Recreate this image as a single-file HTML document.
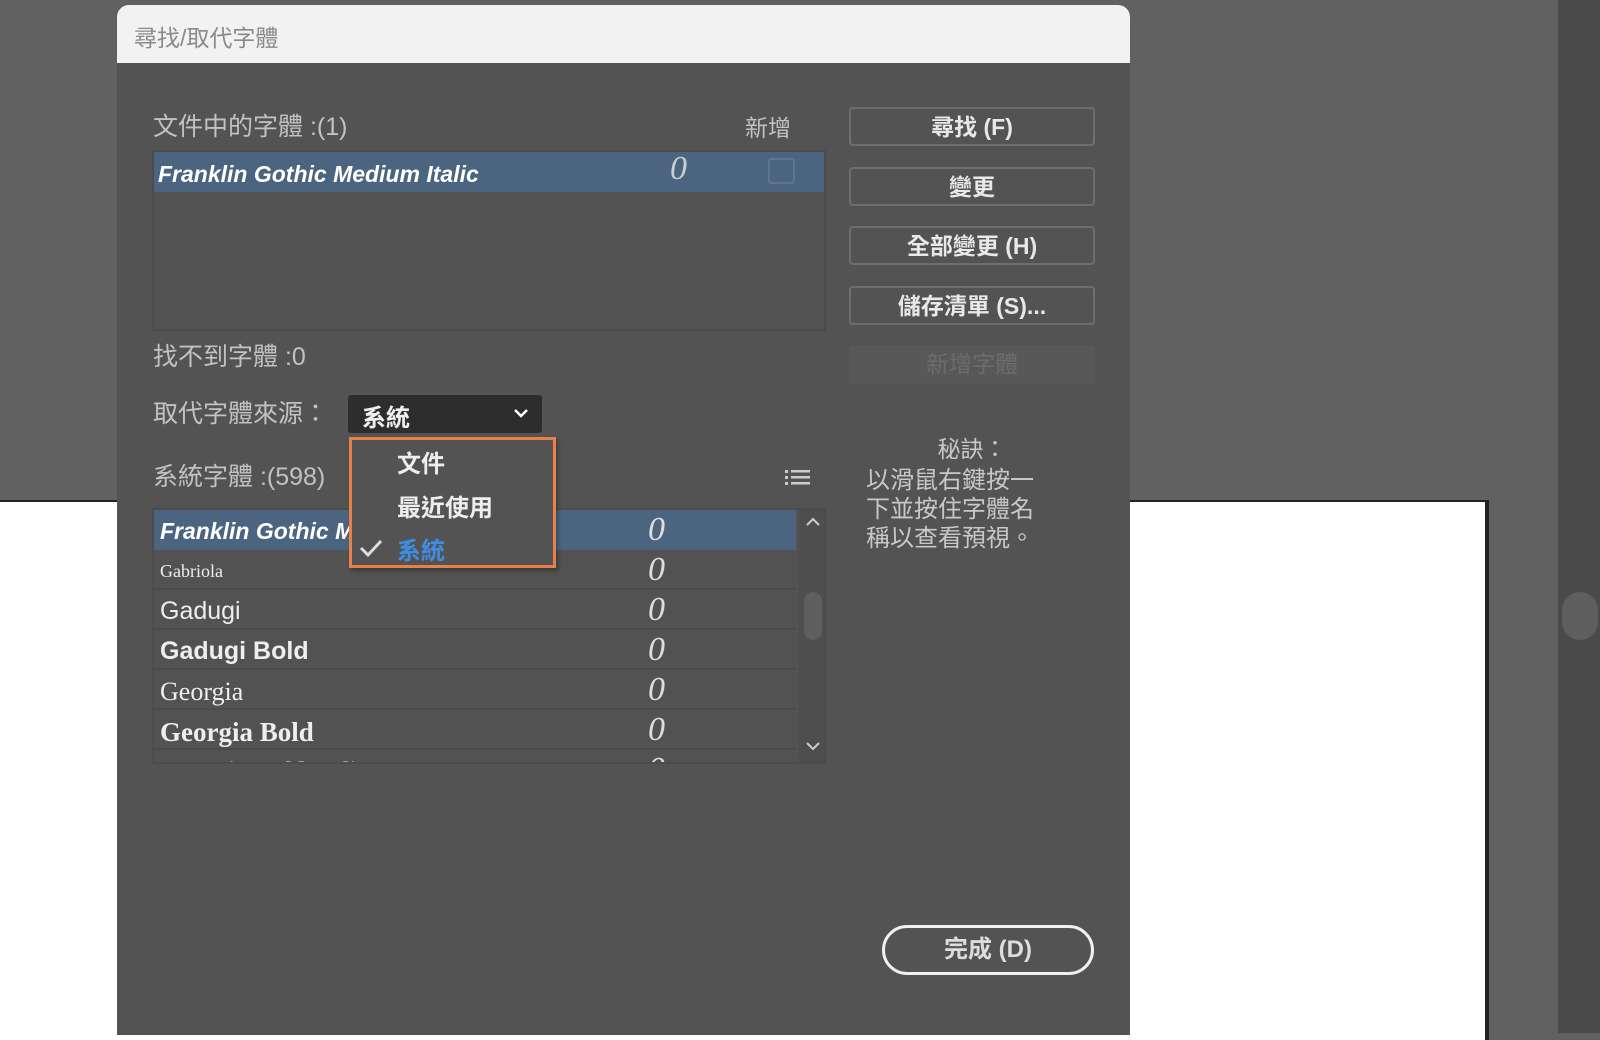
<!DOCTYPE html>
<html><head><meta charset="utf-8">
<style>
*{margin:0;padding:0;box-sizing:border-box}
body{width:1600px;height:1033px;overflow:hidden;background:#616161;position:relative;font-family:"Liberation Sans","Noto Sans CJK TC",sans-serif;}
.abs{position:absolute}
.lbl{position:absolute;color:#c2c2c2;font-size:25px;line-height:30px;white-space:nowrap}
.btn{position:absolute;left:849px;width:246px;height:39px;border:2px solid #6e6e6e;border-radius:4px;color:#e8e8e8;font-size:23px;font-weight:bold;text-align:center;line-height:36px}
.row{position:absolute;left:0;width:642px;height:40px;border-bottom:2px solid #4b4b4b;color:#eee;white-space:nowrap}
.row span{position:absolute;left:6px;top:7px}
.row i{position:absolute;left:494px;top:1px;font-family:"Liberation Serif",serif;font-size:34px;color:#ddd}
</style></head><body>
<div class="abs" style="left:0;top:500px;width:1490px;height:540px;background:#fff;border-top:2px solid #222;"></div>
<div class="abs" style="left:1485px;top:500px;width:4px;height:540px;background:#222"></div>
<div class="abs" style="left:1489px;top:500px;width:69px;height:540px;background:#616161"></div>
<div class="abs" style="left:1558px;top:0;width:42px;height:1033px;background:#4a4a4a"></div>
<div class="abs" style="left:1562px;top:592px;width:36px;height:48px;border-radius:18px;background:#5e5e5e"></div>

<div class="abs" style="left:117px;top:5px;width:1013px;height:1030px;background:#535353;border-radius:12px 12px 0 0;overflow:hidden">
  <div class="abs" style="left:0;top:0;width:1013px;height:58px;background:#f2f2f2"></div>
  <div class="abs" style="left:17px;top:14px;font-size:23px;color:#8a8a8a">尋找/取代字體</div>
</div>

<div class="lbl" style="left:153px;top:112px">文件中的字體 :(1)</div>
<div class="lbl" style="left:745px;top:113px;font-size:23px">新增</div>

<div class="abs" style="left:152px;top:150px;width:674px;height:181px;border:2px solid #4c4c4c;background:#525252"></div>
<div class="abs" style="left:154px;top:152px;width:670px;height:40px;background:#4b6480"></div>
<div class="abs" style="left:158px;top:161px;color:#fff;font-size:23px;font-weight:bold;font-style:italic">Franklin Gothic Medium Italic</div>
<div class="abs" style="left:670px;top:150px;font-family:'Liberation Serif',serif;font-style:italic;font-size:34px;color:#ccc">0</div>
<div class="abs" style="left:768px;top:158px;width:27px;height:26px;border:2px solid #5d7590;border-radius:3px"></div>

<div class="lbl" style="left:153px;top:342px">找不到字體 :0</div>
<div class="lbl" style="left:153px;top:399px">取代字體來源：</div>
<div class="abs" style="left:348px;top:395px;width:194px;height:38px;background:#2d2d2d;border-radius:3px"></div>
<div class="abs" style="left:362px;top:398px;color:#eee;font-size:24px;font-weight:bold">系統</div>
<svg class="abs" style="left:512px;top:407px" width="18" height="12"><path d="M3 3 L9 9 L15 3" stroke="#fff" stroke-width="2.5" fill="none"/></svg>

<div class="lbl" style="left:153px;top:462px">系統字體 :(598)</div>
<svg class="abs" style="left:785px;top:469px" width="26" height="18"><g fill="#ccc"><rect x="0" y="1" width="3" height="3"/><rect x="0" y="7" width="3" height="3"/><rect x="0" y="13" width="3" height="3"/><rect x="6" y="1" width="19" height="2.5"/><rect x="6" y="7" width="19" height="2.5"/><rect x="6" y="13" width="19" height="2.5"/></g></svg>

<div class="abs" style="left:152px;top:508px;width:674px;height:256px;border:2px solid #4c4c4c;overflow:hidden;background:#525252">
  <div class="row" style="top:0;background:#4b6480;border:none"><span style="font-weight:bold;font-style:italic;font-size:23px;color:#fff;top:8px">Franklin Gothic Medium Italic</span><i>0</i></div>
  <div class="row" style="top:40px"><span style="font-family:'Liberation Serif',serif;font-size:18px;top:11px">Gabriola</span><i>0</i></div>
  <div class="row" style="top:80px"><span style="font-size:25px">Gadugi</span><i>0</i></div>
  <div class="row" style="top:120px"><span style="font-size:25px;font-weight:bold">Gadugi Bold</span><i>0</i></div>
  <div class="row" style="top:160px"><span style="font-family:'Liberation Serif',serif;font-size:26px">Georgia</span><i>0</i></div>
  <div class="row" style="top:200px"><span style="font-family:'Liberation Serif',serif;font-size:27px;font-weight:bold">Georgia Bold</span><i>0</i></div>
  <div class="row" style="top:240px"><span style="font-family:'Liberation Serif',serif;font-size:26px;font-weight:bold;font-style:italic">Georgia Bold Italic</span><i>0</i></div>
  <div class="abs" style="left:645px;top:0;width:25px;height:252px;background:#4e4e4e"></div>
  <div class="abs" style="left:650px;top:82px;width:18px;height:48px;border-radius:9px;background:#5e5e5e"></div>
  <svg class="abs" style="left:650px;top:6px" width="18" height="12"><path d="M3 9 L9 3 L15 9" stroke="#ccc" stroke-width="2" fill="none"/></svg>
  <svg class="abs" style="left:650px;top:230px" width="18" height="12"><path d="M3 3 L9 9 L15 3" stroke="#ccc" stroke-width="2" fill="none"/></svg>
</div>

<div class="abs" style="left:349px;top:437px;width:207px;height:131px;background:#535353;border:3px solid #e8804a;box-shadow:2px 3px 4px rgba(0,0,0,.3)"></div>
<div class="abs" style="left:397px;top:444px;color:#eee;font-size:24px;font-weight:bold">文件</div>
<div class="abs" style="left:397px;top:488px;color:#eee;font-size:24px;font-weight:bold">最近使用</div>
<svg class="abs" style="left:358px;top:538px" width="26" height="20"><path d="M3 10 L10 17 L23 3" stroke="#ddd" stroke-width="3" fill="none"/></svg>
<div class="abs" style="left:397px;top:531px;color:#3f8de0;font-size:24px;font-weight:bold">系統</div>

<div class="btn" style="top:107px">尋找 (F)</div>
<div class="btn" style="top:167px">變更</div>
<div class="btn" style="top:226px">全部變更 (H)</div>
<div class="btn" style="top:286px">儲存清單 (S)...</div>
<div class="btn" style="top:345px;border:none;background:#585858;color:#6c6c6c;font-weight:normal;line-height:39px">新增字體</div>

<div class="abs" style="left:849px;top:430px;width:246px;text-align:center;color:#c8c8c8;font-size:23px">秘訣：</div>
<div class="abs" style="left:866px;top:466px;color:#c8c8c8;font-size:24px;line-height:29px">以滑鼠右鍵按一<br>下並按住字體名<br>稱以查看預視。</div>

<div class="abs" style="left:882px;top:925px;width:212px;height:50px;border:3px solid #f0f0f0;border-radius:25px;color:#ddd;font-size:24px;font-weight:bold;text-align:center;line-height:43px">完成 (D)</div>
</body></html>
